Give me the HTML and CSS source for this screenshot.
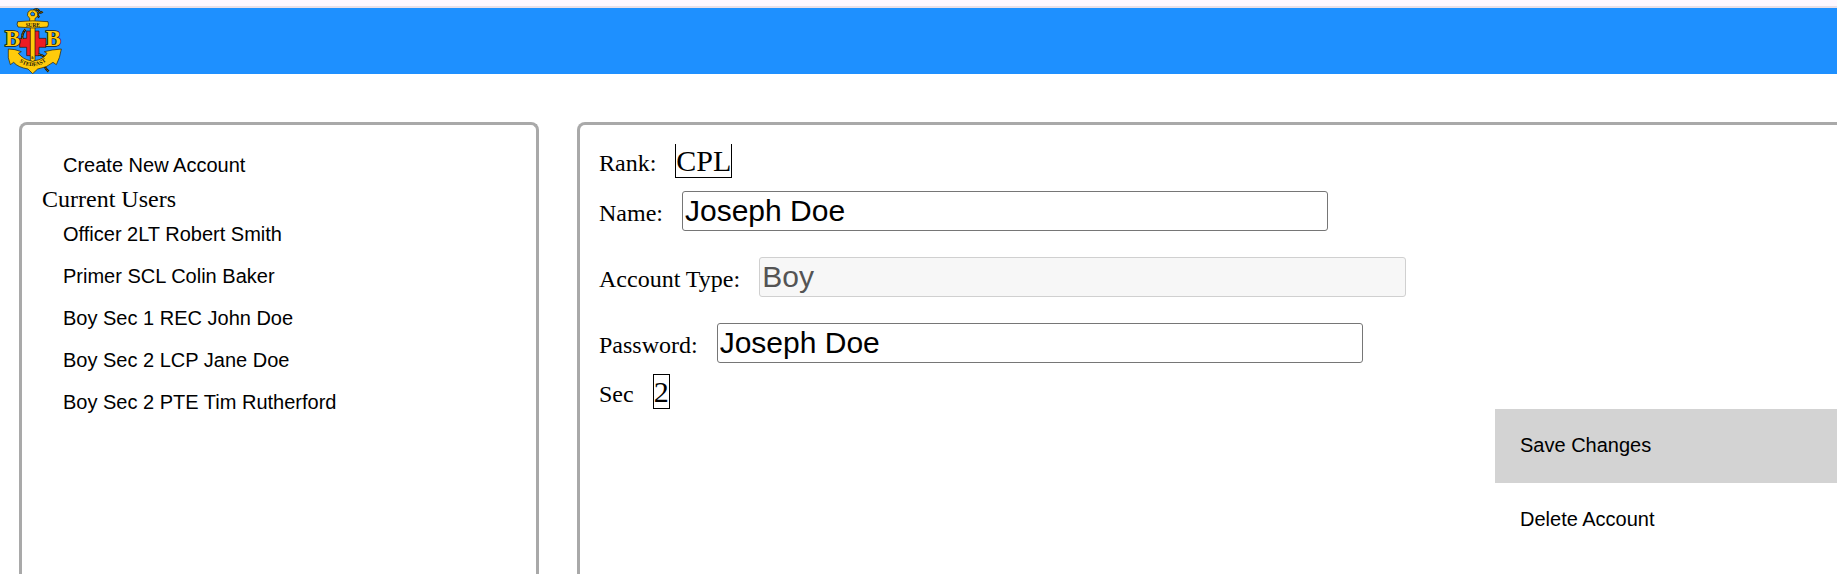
FILE: index.html
```html
<!DOCTYPE html>
<html lang="en">
<head>
<meta charset="utf-8">
<title>Accounts</title>
<link rel="stylesheet" href="styles.css">
</head>
<body>
<header class="topbar">
  <svg class="logo" viewBox="3 24 192 198" role="img" aria-label="Boys' Brigade">
    <g stroke="#1c1608" stroke-width="2" stroke-linejoin="round">
      <path fill="#ed1c24" d="M83 93h37v22h21v27h-21v25H83v-25H62v-27h21z"/>
      <path fill="none" stroke-width="7" d="M104 31q12-6 16 2t11 2M119 37q-8 8 2 15M80 88q-14 14-9 29M118 163q25 4 19 20t12 32"/>
      <path fill="none" stroke="#d9a90c" stroke-dasharray="6 3" d="M104 31q12-6 16 2t11 2M119 37q-8 8 2 15M80 88q-14 14-9 29M118 163q25 4 19 20t12 32"/>
      <path fill="#ffcb0b" d="M28 147q20 0 39 8l-9 5q14 18 36 22h14q26-4 36-22l-8-5q22-6 51-8-4 27-15 47l-10-7q-18 16-46 20l-15 14-14-14q-30-5-43-20l-10 7q-9-18-6-47z"/>
      <path fill="#ffcb0b" d="M94 80h14v101q-7 7-14 0z"/>
      <path fill="#ffcb0b" fill-rule="evenodd" d="M92 65v-10q-11-8-5-19 7-9 19-6 13 6 10 17-2 6-8 8v10zM97 47h9q5-7-5-11-10 2-4 11z"/>
      <path fill="#ffcb0b" d="M56 65q45-5 91 0 3 8-1 16-44 6-89 0-5-8-1-16z"/>
    </g>
    <path id="motto" fill="none" d="M61 186q40 26 81-2"/>
    <g class="logo-text">
      <text class="initial" x="18" y="138">B</text>
      <text class="initial" x="140" y="138">B</text>
      <text class="word" x="80" y="80">SURE</text>
      <text class="amp" x="96" y="178">&amp;</text>
      <text class="stedfast"><textPath href="#motto">STEDFAST</textPath></text>
    </g>
  </svg>
</header>
<main class="layout">
  <nav class="card users">
    <button class="item" type="button">Create New Account</button>
    <div class="users-title">Current Users</div>
    <button class="item" type="button">Officer 2LT Robert Smith</button>
    <button class="item" type="button">Primer SCL Colin Baker</button>
    <button class="item" type="button">Boy Sec 1 REC John Doe</button>
    <button class="item" type="button">Boy Sec 2 LCP Jane Doe</button>
    <button class="item" type="button">Boy Sec 2 PTE Tim Rutherford</button>
  </nav>
  <form class="card account">
    <div class="row"><span>Rank:</span><span class="value value-open">CPL</span></div>
    <div class="fields">
      <div class="row"><label for="name">Name:</label><input class="field" id="name" type="text" value="Joseph Doe"></div>
      <div class="row"><label for="type">Account Type:</label><input class="field" id="type" type="text" value="Boy" disabled></div>
      <div class="row"><label for="password">Password:</label><input class="field" id="password" type="text" value="Joseph Doe"></div>
    </div>
    <div class="row"><span>Sec</span><span class="value">2</span></div>
    <div class="actions">
      <button class="action action-active" type="button">Save Changes</button>
      <button class="action" type="button">Delete Account</button>
    </div>
  </form>
</main>
</body>
</html>
```
FILE: styles.css
```css
* { box-sizing: border-box; }

html, body { height: 100%; }

body {
  margin: 0;
  display: flex;
  flex-direction: column;
  overflow: hidden;
  background: #fff;
  color: #000;
  font-family: "Liberation Serif", "Times New Roman", serif;
}

.topbar {
  flex: none;
  border-top: 6px solid #fef7ff;
  background: linear-gradient(#e9dfe8 2px, dodgerblue 2px);
  padding-top: 2px;
}

.logo { display: block; width: 64px; height: 66px; }
.logo-text { font-family: "Liberation Serif", serif; font-weight: bold; fill: #1c1608; }
.initial { font-size: 68px; fill: #ffcb0b; stroke: #1c1608; stroke-width: 5px; paint-order: stroke; }
.word { font-size: 16px; }
.amp { font-size: 10px; }
.stedfast { font-size: 17px; }

.layout {
  flex: 1;
  display: flex;
  gap: 38px;
  padding: 48px 0 0 19px;
  margin-right: -20px;
}

.card {
  border: 3px solid darkgray;
  border-bottom: 0;
  border-radius: 8px 8px 0 0;
  padding: 19px 0 0 19px;
}

.users { flex: 0 0 520px; padding-left: 20px; }
.account { flex: 1; min-width: 0; font-size: 24px; }

.users-title { font-size: 24px; line-height: 27px; }

button {
  display: block;
  border: 0;
  background: none;
  color: inherit;
  text-align: left;
  font: 20px "Liberation Sans", Arial, sans-serif;
}

.item { width: 100%; height: 42px; padding: 0 21px; }

.row { display: flex; align-items: baseline; gap: 19px; }

.value { border: 1px solid #000; font-size: 30px; line-height: 33px; }
.value-open { border-top: 0; }

.fields {
  display: flex;
  flex-direction: column;
  gap: 26px;
  margin: 13px 0 11px;
}

.field {
  width: 51.5%;
  height: 40px;
  padding: 1px 2px;
  border: 1px solid #767676;
  border-radius: 3px;
  background: #fff;
  color: #000;
  font: 30px "Liberation Sans", Arial, sans-serif;
}

.field:disabled { border-color: #d0d0d0; background: #f7f7f7; color: #545454; }

.actions { width: 359px; margin-left: auto; }
.action { width: 100%; height: 74px; padding: 0 25px 2px; }
.action-active { background: lightgray; }
```
